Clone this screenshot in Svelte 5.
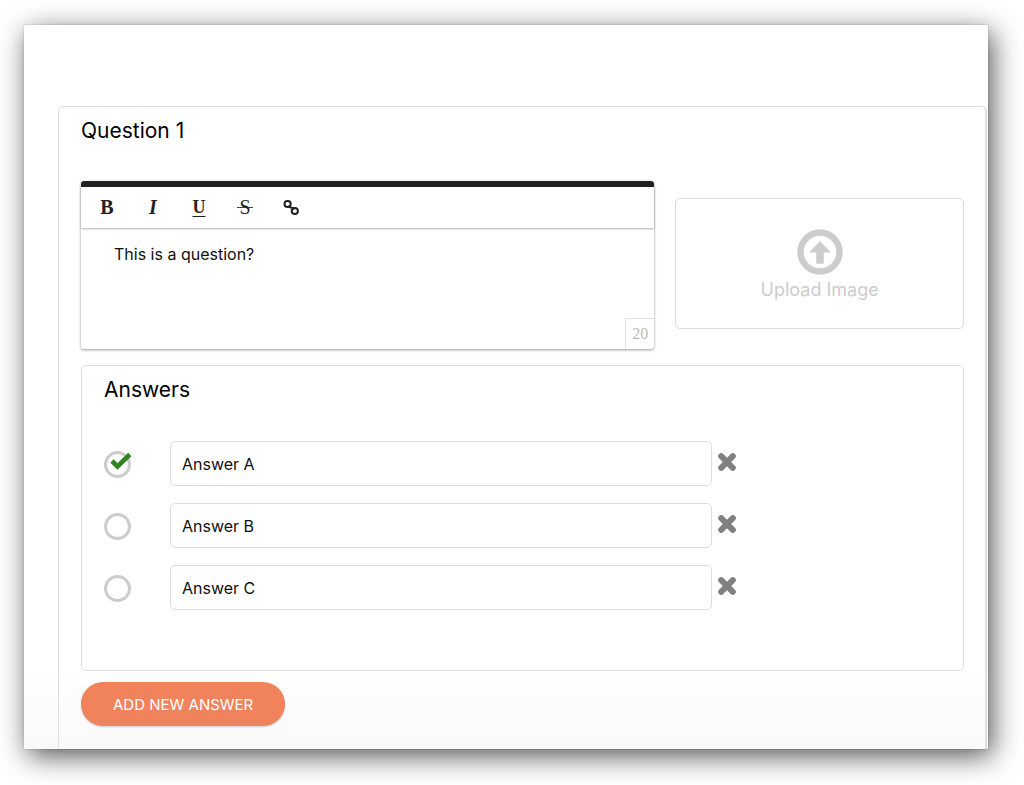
<script lang="ts">
  type Answer = {
    id: string;
    text: string;
  };

  const tools = [
    { name: 'bold', label: 'B' },
    { name: 'italic', label: 'I' },
    { name: 'underline', label: 'U' },
    { name: 'strike', label: 'S' }
  ];

  let question = $state('This is a question?');
  let correct = $state('a');
  let answers = $state<Answer[]>([
    { id: 'a', text: 'Answer A' },
    { id: 'b', text: 'Answer B' },
    { id: 'c', text: 'Answer C' }
  ]);
  let nextId = 1;

  function addAnswer(): void {
    answers.push({ id: `new-${nextId}`, text: '' });
    nextId += 1;
  }

  function removeAnswer(id: string): void {
    answers = answers.filter((answer) => answer.id !== id);
  }
</script>

<main class="page">
  <div class="sheet">
    <section class="question">
      <h2>Question 1</h2>

      <div class="question-row">
        <div class="editor">
          <div class="toolbar">
            {#each tools as tool}
              <button type="button" class={tool.name} aria-label={tool.name}>{tool.label}</button>
            {/each}
            <button type="button" aria-label="link">
              <svg width="16" height="16" viewBox="0 0 16 16" fill="none" stroke="#222" stroke-width="2">
                <circle cx="4.6" cy="4" r="3.1" />
                <circle cx="11.8" cy="11" r="3.1" />
                <path d="M5 5.800Q5.600 7.800 8 7.600Q10.600 7.400 11.200 9.600" stroke-width="1.8" />
              </svg>
            </button>
          </div>
          <textarea aria-label="Question text" bind:value={question}></textarea>
          <span class="counter">20</span>
        </div>

        <button type="button" class="upload">
          <svg width="46" height="46" viewBox="0 0 46 46">
            <circle cx="23" cy="23" r="19.5" fill="none" stroke="#ccc" stroke-width="6.4" />
            <path
              d="M23 12 33 22.4q.6 1-.6 1H26.8V34q0 .8-.8.8H20q-.8 0-.8-.8V23.4H13.6q-1.2 0-.6-1Z"
              fill="#ccc"
            />
          </svg>
          <span>Upload Image</span>
        </button>
      </div>

      <section class="answers">
        <h2>Answers</h2>
        <ul>
          {#each answers as answer (answer.id)}
            <li>
              <label class="choice">
                <input
                  type="radio"
                  name="correct"
                  value={answer.id}
                  bind:group={correct}
                  aria-label={`Mark ${answer.text} as correct`}
                />
                {#if correct === answer.id}
                  <svg class="tick" width="22" height="18" viewBox="0 0 22 18">
                    <path d="M2 9 7.5 14.5 19.8 2.5" fill="none" stroke="#2f8420" stroke-width="4.6" />
                  </svg>
                {/if}
              </label>
              <input type="text" class="answer-text" aria-label="Answer" bind:value={answer.text} />
              <button
                type="button"
                class="remove"
                aria-label="Remove answer"
                onclick={() => removeAnswer(answer.id)}
              >
                <svg width="18" height="18" viewBox="0 0 18 18">
                  <path
                    d="M3.2 3.2 14.8 14.8M14.8 3.2 3.2 14.8"
                    stroke="#808080"
                    stroke-width="6"
                    stroke-linecap="round"
                  />
                </svg>
              </button>
            </li>
          {/each}
        </ul>
      </section>

      <button type="button" class="add" onclick={addAnswer}>ADD NEW ANSWER</button>
    </section>
  </div>
</main>

<style>
  :global(body) {
    margin: 0;
    background: #fff;
  }

  .page,
  .page * {
    box-sizing: border-box;
  }

  .page {
    padding: 25px 36px 36px 24px;
    overflow: hidden;
    color: #111;
    font-family: Gilroy, Inter, sans-serif;
    font-size: 16px;
  }

  button,
  input,
  textarea {
    margin: 0;
    color: inherit;
    font: inherit;
  }

  button {
    padding: 0;
    border: 0;
    background: transparent;
    cursor: pointer;
  }

  svg {
    display: block;
  }

  h2 {
    margin: 0;
    font-size: 21px;
    font-weight: 400;
    line-height: 28px;
    color: #000;
  }

  .sheet {
    padding: 81px 1px 0 34px;
    border-radius: 2px;
    background: linear-gradient(to top, #f9f9f9, #fff 80px);
    box-shadow:
      0 0 2px rgba(0, 0, 0, 0.25),
      4px 7px 28px rgba(0, 0, 0, 0.68);
  }

  .question {
    padding: 10px 21px 23px 22px;
    border: 1px solid #e0e0e0;
    border-width: 1px 2px 0 1px;
    border-radius: 5px 5px 0 0;
  }

  .question-row {
    display: flex;
    align-items: center;
    gap: 21px;
    margin-top: 36px;
  }

  .editor {
    position: relative;
    flex: 2;
    border-top: 6px solid #222;
    border-radius: 3px;
    box-shadow: 0 1px 3px rgba(0, 0, 0, 0.4);
  }

  .toolbar {
    display: flex;
    height: 41px;
    padding: 0 3px;
    box-shadow: 0 1px 2px rgba(0, 0, 0, 0.3);
  }

  .toolbar button {
    display: grid;
    place-items: center;
    width: 46px;
    color: #222;
    font-family: 'Liberation Serif', serif;
    font-size: 20px;
  }

  .toolbar .bold {
    font-weight: 700;
  }

  .toolbar .italic {
    font-style: italic;
    font-weight: 700;
  }

  .toolbar .underline {
    font-size: 18px;
    font-weight: 700;
    text-decoration: underline 1px;
    text-underline-offset: 3px;
  }

  /* the bar runs wider than the letter */
  .toolbar .strike {
    background: linear-gradient(#444, #444) center / 16px 1px no-repeat;
  }

  textarea {
    display: block;
    width: 100%;
    height: 121px;
    padding: 15px 33px;
    border: 0;
    outline: 0;
    background: transparent;
    line-height: 22px;
    resize: none;
  }

  .counter {
    position: absolute;
    right: 0;
    bottom: 0;
    width: 29px;
    height: 31px;
    border: 1px solid #e0e0e0;
    border-width: 1px 0 0 1px;
    color: #bbb;
    font-family: 'Liberation Serif', serif;
    font-size: 16px;
    line-height: 29px;
    text-align: center;
  }

  .upload {
    display: flex;
    flex: 1;
    flex-direction: column;
    align-items: center;
    justify-content: center;
    gap: 4px;
    height: 131px;
    margin-top: -3px;
    padding-top: 3px;
    border: 1px solid #ddd;
    border-radius: 5px;
    color: #ccc;
    font-size: 18px;
    line-height: 22px;
  }

  .answers {
    margin-top: 16px;
    padding: 10px 22px 60px;
    border: 1px solid #ddd;
    border-radius: 5px;
  }

  ul {
    display: grid;
    gap: 17px;
    margin: 37px 0 0;
    padding: 0;
    list-style: none;
  }

  li {
    display: grid;
    grid-template-columns: 66px 1fr 229px;
    align-items: center;
  }

  .choice {
    position: relative;
    width: 27px;
    padding-top: 2px;
  }

  .choice input {
    display: block;
    width: 27px;
    height: 27px;
    border: 3px solid #ccc;
    border-radius: 50%;
    appearance: none;
  }

  .tick {
    position: absolute;
    top: 3px;
    left: 6px;
    pointer-events: none;
  }

  .answer-text {
    min-width: 0;
    height: 45px;
    padding: 0 11px;
    border: 1px solid #ddd;
    border-radius: 5px;
    background: #fff;
  }

  .remove {
    justify-self: start;
    padding: 0 6px 3px;
  }

  .add {
    display: block;
    height: 44px;
    margin-top: 11px;
    padding: 0 32px;
    border-radius: 22px;
    background: #f0825c;
    box-shadow: 0 1px 2px rgba(0, 0, 0, 0.2);
    color: #fff;
    font-size: 15px;
  }
</style>
